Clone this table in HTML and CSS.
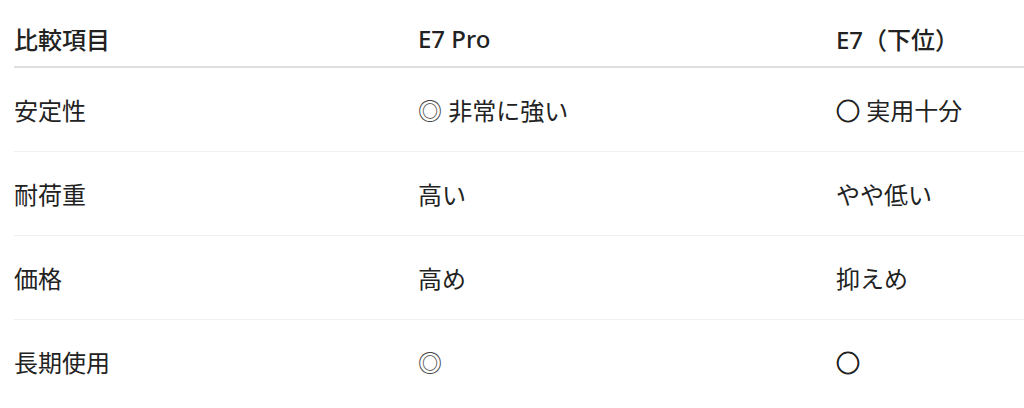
FILE: index.html
```html
<!DOCTYPE html>
<html lang="ja">
<head>
<meta charset="utf-8">
<link rel="stylesheet" href="styles.css">
</head>
<body>
<table class="cmp">
  <thead>
    <tr><th class="c1">比較項目</th><th class="c2">E7 Pro</th><th class="c3">E7（下位）</th></tr>
  </thead>
  <tbody>
    <tr><td>安定性</td><td><span class="dbl">◎</span> 非常に強い</td><td><span class="sgl">○</span> 実用十分</td></tr>
    <tr><td>耐荷重</td><td>高い</td><td>やや低い</td></tr>
    <tr><td>価格</td><td>高め</td><td>抑えめ</td></tr>
    <tr><td>長期使用</td><td><span class="dbl">◎</span></td><td><span class="sgl">○</span></td></tr>
  </tbody>
</table>
</body>
</html>
```
FILE: styles.css
```css
html, body {
  margin: 0;
  padding: 0;
  background: #fff;
}
body {
  font-family: "Noto Sans", "Noto Sans CJK JP", sans-serif;
  color: #222;
  overflow: hidden;
}
.cmp {
  border-collapse: collapse;
  width: 1010px;
  margin-left: 14px;
  table-layout: fixed;
  font-size: 24px;
}
.cmp th, .cmp td {
  text-align: left;
  padding: 0;
  vertical-align: middle;
  white-space: nowrap;
}
.cmp .c1 { width: 404px; }
.cmp .c2 { width: 418px; }
.cmp th {
  font-weight: 500;
  height: 56px;
  padding-top: 10px;
  border-bottom: 2px solid #dedede;
}
.cmp td {
  height: 83px;
  border-bottom: 1px solid #efefef;
}
.cmp tbody tr:last-child td { border-bottom: none; }
.sgl {
  -webkit-text-stroke: 0.9px #222;
}
.dbl {
  color: #444;
}
```
